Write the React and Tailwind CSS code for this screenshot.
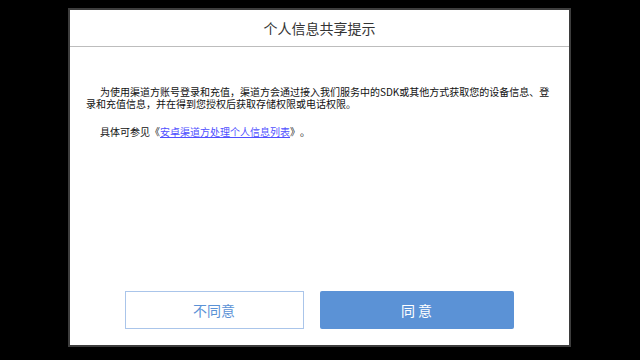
export default function App() {
  return (
    <div
      className="h-[360px] w-[640px] bg-black pt-[8px]"
      style={{ fontFamily: '"Noto Sans CJK SC", "Noto Sans", sans-serif' }}
    >
      <div className="ml-[68px] flex h-[339px] w-[503px] flex-col border-2 border-[#3d3d3d] bg-white">
        <div className="flex h-[37px] items-center justify-center border-b border-[#bdbdbd] text-[14px] text-[#333]">
          个人信息共享提示
        </div>
        <div className="flex-1 px-[16px] pt-[39px] pr-[18px] text-[10px] leading-[12px] text-[#111] [text-spacing-trim:space-all]">
          <p className="indent-[14px]">
            为使用渠道方账号登录和充值，渠道方会通过接入我们服务中的SDK或其他方式获取您的设备信息、登录和充值信息，并在得到您授权后获取存储权限或电话权限。
          </p>
          <p className="mt-[16px] indent-[14px]">
            具体可参见《<span className="text-[#5050ff] underline">安卓渠道方处理个人信息列表</span>》。
          </p>
        </div>
        <div className="flex justify-center gap-[16px] pb-[16px] pr-[1px]">
          <button className="h-[38px] w-[179px] border border-[#aac5ea] bg-white text-[14px] text-[#5b92d6]">
            不同意
          </button>
          <button className="h-[38px] w-[194px] rounded-[2px] bg-[#5b92d6] text-[14px] text-white">
            同 意
          </button>
        </div>
      </div>
    </div>
  )
}
